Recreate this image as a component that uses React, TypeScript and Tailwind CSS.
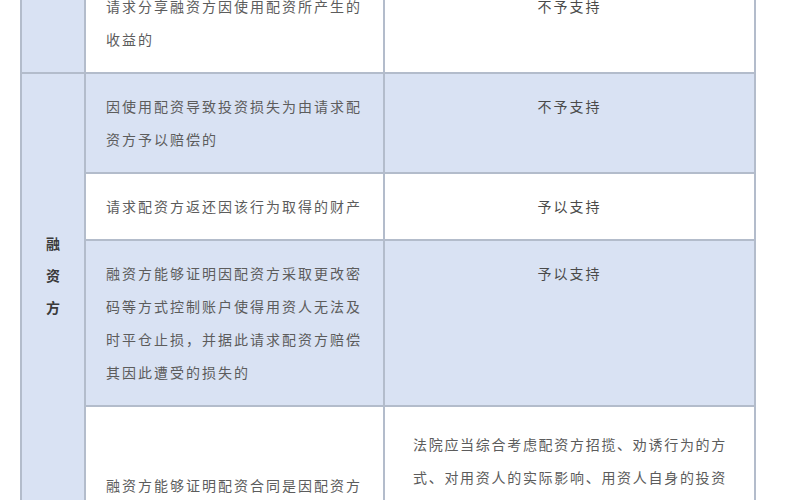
import React from "react";

type Row = {
  claim: string[];
  result: string[];
  blue: boolean;
  resultLeft?: boolean;
};

const rows: Row[] = [
  {
    claim: ["请求分享融资方因使用配资所产生的", "收益的"],
    result: ["不予支持"],
    blue: false,
  },
  {
    claim: ["因使用配资导致投资损失为由请求配", "资方予以赔偿的"],
    result: ["不予支持"],
    blue: true,
  },
  {
    claim: ["请求配资方返还因该行为取得的财产"],
    result: ["予以支持"],
    blue: false,
  },
  {
    claim: [
      "融资方能够证明因配资方采取更改密",
      "码等方式控制账户使得用资人无法及",
      "时平仓止损，并据此请求配资方赔偿",
      "其因此遭受的损失的",
    ],
    result: ["予以支持"],
    blue: true,
  },
  {
    claim: [
      "融资方能够证明配资合同是因配资方",
      "招揽、劝诱而订立，请求配资方赔偿",
      "其全部或部分损失的",
    ],
    result: [
      "法院应当综合考虑配资方招揽、劝诱行为的方",
      "式、对用资人的实际影响、用资人自身的投资",
      "经验、风险承受能力等因素，对融资方的请求",
      "予以支持、部分支持或不予支持，并判令配资",
      "方承担相应的赔偿责任，具体比例由法院酌定",
      "。",
    ],
    blue: false,
    resultLeft: true,
  },
];

const font = { fontFamily: '"Noto Sans CJK SC", "Noto Sans", sans-serif' };

const App = () => {
  return (
    <div className="w-[800px] h-[500px] overflow-hidden bg-white" style={font}>
      <table className="ml-[20px] -mt-[28px] w-[734px] table-fixed border-collapse">
        <colgroup>
          <col className="w-[64px]" />
          <col className="w-[299px]" />
          <col className="w-[371px]" />
        </colgroup>
        <tbody>
          {rows.map((row, index) => (
            <tr key={index} className={row.blue ? "bg-[#d9e2f3]" : "bg-white"}>
              {index === 0 && (
                <td className="border-2 border-[#b3bccb] bg-[#d9e2f3]"></td>
              )}
              {index === 1 && (
                <td
                  rowSpan={4}
                  className="border-2 border-[#b3bccb] bg-[#d9e2f3] align-top pt-[153px] text-center text-[14px] leading-[32px] font-bold text-[#3a3a3a]"
                >
                  <div>融</div>
                  <div>资</div>
                  <div>方</div>
                </td>
              )}
              <td
                className={`border-2 border-[#b3bccb] align-top px-[20px] pb-[16px] text-[14px] leading-[33px] tracking-[2px] text-[#5c5c5c] ${
                  index === 4 ? "pt-[62px]" : "pt-[16px]"
                }`}
              >
                {row.claim.map((line, i) => (
                  <div key={i} className="whitespace-nowrap">
                    {line}
                  </div>
                ))}
              </td>
              <td
                className={`border-2 border-[#b3bccb] align-top text-[14px] leading-[33px] text-[#4a4a4a] ${
                  row.resultLeft
                    ? "px-[28px] pt-[21px] pb-[16px] tracking-[1.7px] text-left text-[#5c5c5c]"
                    : "px-[20px] py-[16px] tracking-[2px] text-center"
                }`}
              >
                {row.result.map((line, i) => (
                  <div key={i} className="whitespace-nowrap">
                    {line}
                  </div>
                ))}
              </td>
            </tr>
          ))}
        </tbody>
      </table>
    </div>
  );
};

export default App;
